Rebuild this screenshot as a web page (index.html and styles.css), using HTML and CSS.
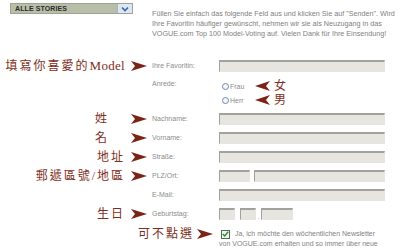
FILE: index.html
```html
<!DOCTYPE html>
<html lang="de">
<head>
<meta charset="utf-8">
<title>Model Voting</title>
<link rel="stylesheet" href="styles.css">
</head>
<body>
<div class="page">
  <div class="top">
    <div class="select">
      <span class="select-text">ALLE STORIES</span>
      <span class="select-btn"><svg width="8" height="6" viewBox="0 0 8 6"><path d="M1 1.5 L4 4.5 L7 1.5" fill="none" stroke="#3a64a8" stroke-width="1.6"/></svg></span>
    </div>
    <p class="intro">Füllen Sie einfach das folgende Feld aus und klicken Sie auf "Senden". Wird<br>Ihre Favoritin häufiger gewünscht, nehmen wir sie als Neuzugang in das<br>VOGUE.com Top 100 Model-Voting auf. Vielen Dank für Ihre Einsendung!</p>
  </div>

  <div class="row r-fav">
    <div class="note"><span class="zh">填寫你喜愛的<span class="latin">Model</span></span><svg class="arr" width="16" height="10" viewBox="0 0 16 10"><path d="M0 0 L16 5 L0 10 L4 5 Z"/></svg></div>
    <div class="lbl">Ihre Favoritin:</div>
    <div class="cell"><input class="field wide" type="text"></div>
  </div>

  <div class="row r-anrede">
    <div class="note"></div>
    <div class="lbl lbl-top">Anrede:</div>
    <div class="cell radios">
      <div class="opt"><span class="radio"></span><span class="opt-text">Frau</span><svg class="arr-l" width="15" height="10" viewBox="0 0 15 10"><path d="M15 0 L0 5 L15 10 L11 5 Z"/></svg><span class="zh">女</span></div>
      <div class="opt"><span class="radio"></span><span class="opt-text">Herr</span><svg class="arr-l" width="15" height="10" viewBox="0 0 15 10"><path d="M15 0 L0 5 L15 10 L11 5 Z"/></svg><span class="zh">男</span></div>
    </div>
  </div>

  <div class="row">
    <div class="note"><span class="zh single">姓</span><svg class="arr" width="16" height="10" viewBox="0 0 16 10"><path d="M0 0 L16 5 L0 10 L4 5 Z"/></svg></div>
    <div class="lbl">Nachname:</div>
    <div class="cell"><input class="field wide" type="text"></div>
  </div>

  <div class="row">
    <div class="note"><span class="zh single">名</span><svg class="arr" width="16" height="10" viewBox="0 0 16 10"><path d="M0 0 L16 5 L0 10 L4 5 Z"/></svg></div>
    <div class="lbl">Vorname:</div>
    <div class="cell"><input class="field wide" type="text"></div>
  </div>

  <div class="row">
    <div class="note"><span class="zh">地址</span><svg class="arr" width="16" height="10" viewBox="0 0 16 10"><path d="M0 0 L16 5 L0 10 L4 5 Z"/></svg></div>
    <div class="lbl">Straße:</div>
    <div class="cell"><input class="field wide" type="text"></div>
  </div>

  <div class="row">
    <div class="note"><span class="zh">郵遞區號/地區</span><svg class="arr" width="16" height="10" viewBox="0 0 16 10"><path d="M0 0 L16 5 L0 10 L4 5 Z"/></svg></div>
    <div class="lbl">PLZ/Ort:</div>
    <div class="cell pair"><input class="field plz" type="text"><input class="field ort" type="text"></div>
  </div>

  <div class="row">
    <div class="note"></div>
    <div class="lbl">E-Mail:</div>
    <div class="cell"><input class="field wide" type="text"></div>
  </div>

  <div class="row r-geb">
    <div class="note"><span class="zh">生日</span><svg class="arr" width="16" height="10" viewBox="0 0 16 10"><path d="M0 0 L16 5 L0 10 L4 5 Z"/></svg></div>
    <div class="lbl">Geburtstag:</div>
    <div class="cell date"><input class="field day" type="text"><input class="field month" type="text"><span class="dot">.</span><input class="field year" type="text"></div>
  </div>

  <div class="row r-news">
    <div class="note note-wide"><span class="zh">可不點選</span><svg class="arr" width="16" height="10" viewBox="0 0 16 10"><path d="M0 0 L16 5 L0 10 L4 5 Z"/></svg></div>
    <p class="news"><span class="check"><svg width="7" height="6" viewBox="0 0 7 6"><path d="M0.8 3 L2.7 4.9 L6.2 0.8" fill="none" stroke="#2f8a2a" stroke-width="1.4"/></svg></span>Ja, ich möchte den wöchentlichen Newsletter<br>von VOGUE.com erhalten und so immer über neue</p>
  </div>
</div>
</body>
</html>
```

FILE: styles.css
```css
html, body {
  margin: 0;
  padding: 0;
  background: #ffffff;
}

.page {
  width: 404px;
  height: 249px;
  overflow: hidden;
  font-family: "Liberation Sans", Arial, sans-serif;
}

.top {
  display: grid;
  grid-template-columns: 152px 1fr;
  height: 56px;
}

.select {
  margin: 3px 0 0 10px;
  width: 123px;
  height: 11px;
  box-sizing: border-box;
  border: 1px solid #9ea491;
  background: #b9bea9;
  display: flex;
  align-items: center;
}

.select-text {
  flex: 1;
  padding-left: 4px;
  font-size: 7px;
  font-weight: bold;
  color: #2c2c2c;
  letter-spacing: 0.1px;
}

.select-btn {
  width: 14px;
  height: 9px;
  background: #dde6f2;
  border-left: 1px solid #a8b6c8;
  display: flex;
  align-items: center;
  justify-content: center;
}

.intro {
  margin: 9px 0 0 0;
  font-size: 7.2px;
  line-height: 10px;
  color: #808080;
  white-space: nowrap;
}

.row {
  display: grid;
  grid-template-columns: 152px 67px 1fr;
  align-items: center;
  height: 19px;
}

.r-anrede {
  height: 34px;
  align-items: start;
}

.r-geb {
  height: 20px;
}

.r-news {
  height: auto;
  margin-top: 3px;
  grid-template-columns: 219px 1fr;
  align-items: start;
}

.note {
  display: flex;
  justify-content: flex-end;
  align-items: center;
  gap: 6px;
  padding-right: 5px;
  height: 19px;
}

.note-wide {
  padding-right: 6px;
  gap: 3px;
  height: 14px;
}

.zh {
  font-family: "Liberation Serif", "Noto Sans CJK TC", serif;
  font-size: 12px;
  letter-spacing: 2px;
  color: #7d2e22;
  line-height: 14px;
}

.latin {
  font-size: 13px;
  letter-spacing: 0.3px;
}

.single {
  margin-right: 16px;
}

.arr, .arr-l {
  fill: #7a2418;
  flex: none;
}

.lbl {
  font-size: 7px;
  color: #8c8c8c;
  line-height: 8px;
}

.lbl-top {
  padding-top: 5px;
}

.cell {
  display: flex;
  align-items: center;
}

.field {
  display: block;
  margin: 0;
  padding: 0;
  height: 12px;
  box-sizing: border-box;
  background: #e7e5df;
  border: 1px solid #e7e5df;
  border-top: 2px solid #a3a19b;
  border-left: 1px solid #a3a19b;
  outline: none;
}

.wide {
  width: 166px;
}

.pair {
  gap: 4px;
}

.plz {
  width: 31px;
}

.ort {
  width: 131px;
}

.date .day {
  width: 16px;
  margin-right: 5px;
}

.date .month {
  width: 16px;
}

.dot {
  width: 5px;
  text-align: center;
  font-size: 7px;
  color: #8c8c8c;
  align-self: flex-end;
  line-height: 7px;
}

.date .year {
  width: 32px;
}

.radios {
  flex-direction: column;
  align-items: flex-start;
  padding-top: 4px;
}

.opt {
  display: flex;
  align-items: center;
  height: 14px;
}

.radio {
  width: 7px;
  height: 7px;
  box-sizing: border-box;
  border-radius: 50%;
  border: 1px solid #6f8bb0;
  background: #f4f6f8;
  margin-left: 3px;
  margin-right: 1px;
}

.opt-text {
  font-size: 7px;
  color: #8c8c8c;
  width: 25px;
}

.arr-l {
  margin-right: 4px;
}

.news {
  margin: 0;
  font-size: 7px;
  line-height: 10px;
  color: #7f7f7f;
  white-space: nowrap;
  padding-top: 2px;
}

.check {
  display: inline-flex;
  align-items: center;
  justify-content: center;
  width: 9px;
  height: 9px;
  box-sizing: border-box;
  border: 1px solid #4d6a5a;
  background: #f2f4ee;
  margin: 0 5px 0 2px;
  vertical-align: -1px;
}
```
